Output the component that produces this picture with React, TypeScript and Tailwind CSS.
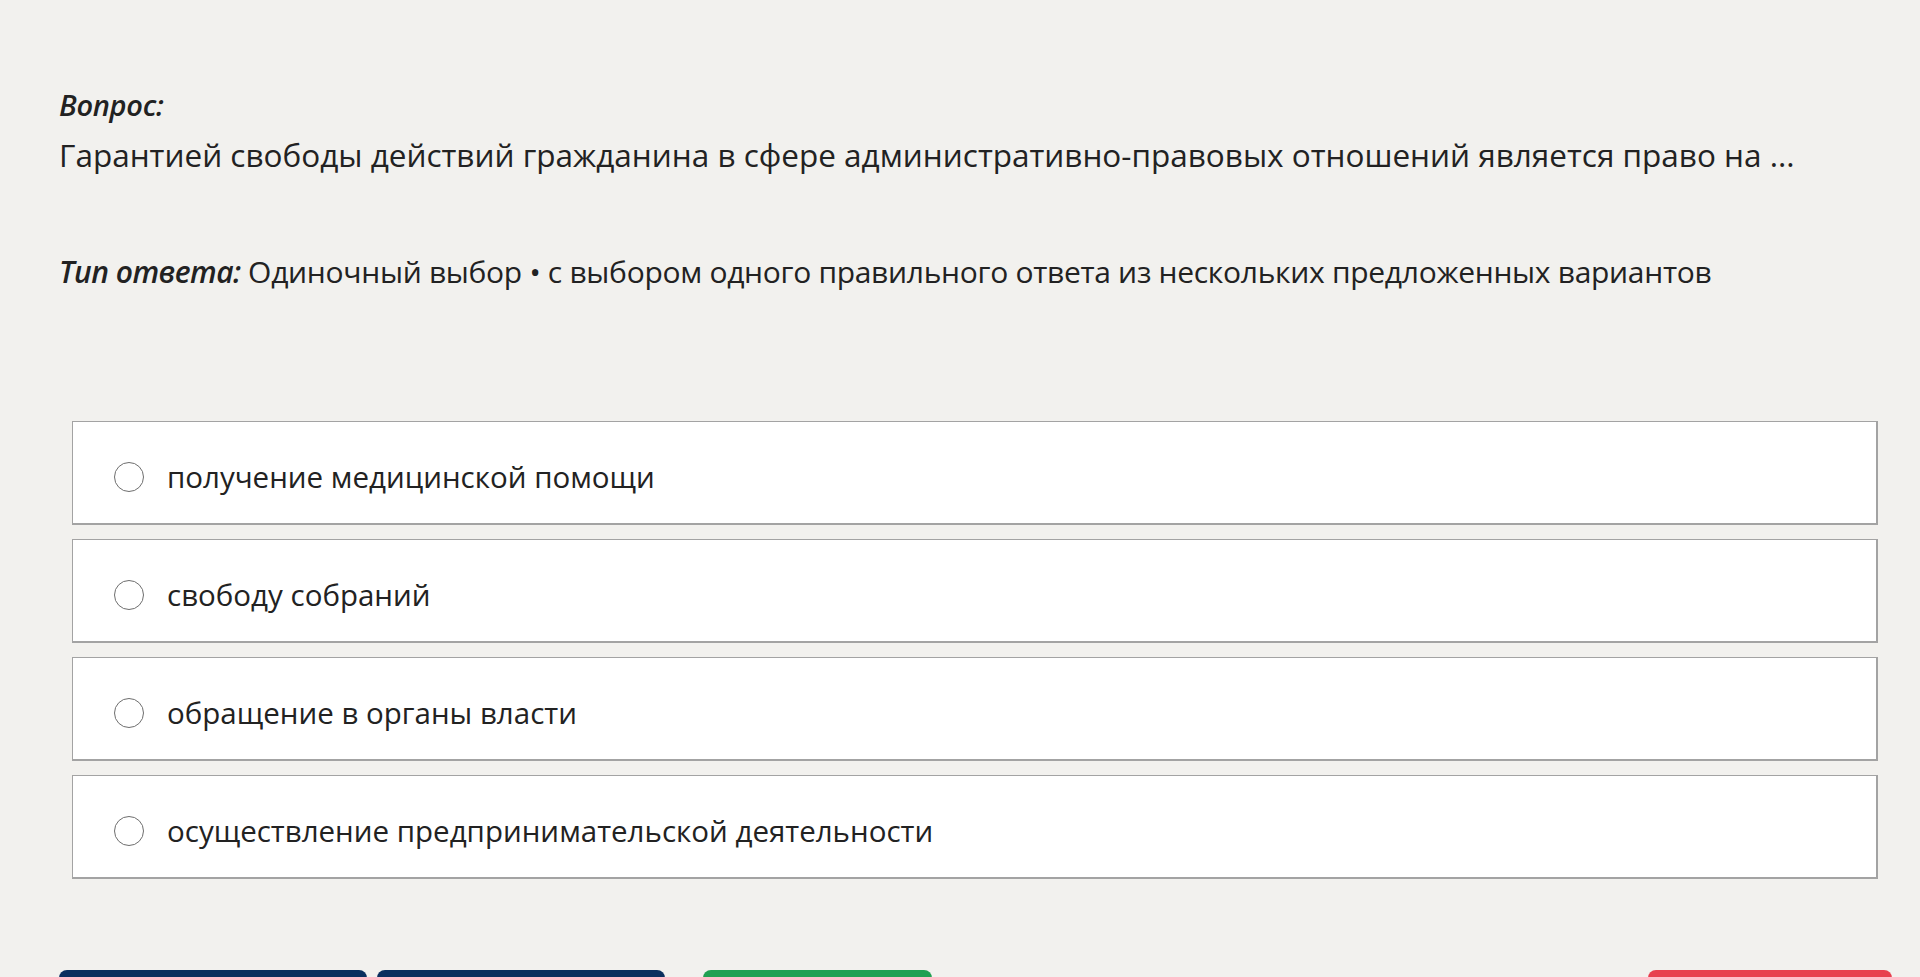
import { useState } from 'react';

const OPTIONS = [
  'получение медицинской помощи',
  'свободу собраний',
  'обращение в органы власти',
  'осуществление предпринимательской деятельности',
];

export default function App() {
  const [picked, setPicked] = useState<number | null>(null);

  return (
    <div
      className="min-h-screen bg-[#f2f1ee] text-[#222] overflow-hidden"
      style={{ fontFamily: '"Open Sans", "Noto Sans", sans-serif' }}
    >
      <div className="pl-[59px] pt-[85px]">
        <div className="text-[29px] leading-[40px] font-semibold italic tracking-[-0.3px]">Вопрос:</div>
        <div className="mt-2 text-[31.5px] leading-[44px]">
          Гарантией свободы действий гражданина в сфере административно-правовых отношений является право на ...
        </div>
        <div className="mt-[73px] text-[30px] leading-[44px] tracking-[-0.3px]">
          <span className="font-semibold italic tracking-[-0.5px]">Тип ответа:</span> Одиночный выбор • с выбором
          одного правильного ответа из нескольких предложенных вариантов
        </div>
      </div>

      <div className="ml-[72px] mr-[42px] mt-[127px] flex flex-col gap-[14px]">
        {OPTIONS.map((text, i) => (
          <label
            key={text}
            onClick={() => setPicked(i)}
            className="h-[104px] bg-white border border-r-2 border-b-2 border-[#a3a3a3] flex items-center pl-[41px] pt-[9px] cursor-pointer"
          >
            <span className="w-[30px] h-[30px] rounded-full border-[1.5px] border-[#6e6e6e] flex items-center justify-center shrink-0">
              {picked === i && <span className="w-[16px] h-[16px] rounded-full bg-[#333]" />}
            </span>
            <span className="ml-[23px] text-[29.5px] leading-[40px]">{text}</span>
          </label>
        ))}
      </div>

      <div className="pl-[59px] pr-[28px] mt-[91px] flex items-start">
        <button className="w-[308px] h-[52px] rounded-[8px] bg-[#0b2f5e]" />
        <button className="ml-[10px] w-[288px] h-[52px] rounded-[8px] bg-[#0b2f5e]" />
        <button className="ml-[38px] w-[229px] h-[52px] rounded-[8px] bg-[#22a052]" />
        <button className="ml-auto w-[244px] h-[52px] rounded-[8px] bg-[#e8404f]" />
      </div>
    </div>
  );
}
